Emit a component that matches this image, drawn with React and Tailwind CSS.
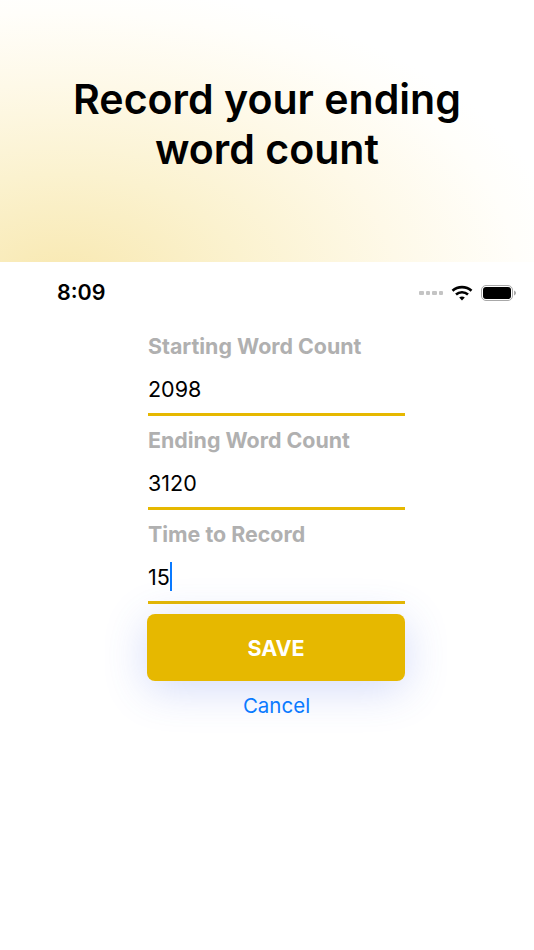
const font = "font-['Inter',sans-serif]";

function Field({ label, value, caret }) {
  return (
    <div className="flex h-[94px] flex-col">
      <div className="h-[32px] pt-[1px] text-[21.4px] leading-[32px] font-bold text-[#b0b0b0]">{label}</div>
      <div className="flex h-[52px] items-center pt-[3px] text-[21.5px] leading-[30px] text-black">
        <span>{value}</span>
        {caret && <span className="h-[29px] w-[2.5px] bg-[#0a7aff]" />}
      </div>
      <div className="h-[2.5px] w-[257px] bg-[#e6b800]" />
    </div>
  );
}

export default function App() {
  return (
    <div className={`h-[950px] w-[534px] overflow-hidden bg-white ${font}`}>
      <header className="flex h-[262px] items-center justify-center bg-[radial-gradient(ellipse_510px_300px_at_60px_282px,#f8e8b0_0%,#fbf2cf_36%,#fef9e8_66%,#fffefa_90%,#ffffff_100%)]">
        <h1 className="mt-[-15px] text-center text-[41.1px] leading-[50px] font-semibold text-black">
          Record your ending<br />word count
        </h1>
      </header>

      <div className="flex h-[62px] items-center justify-between pr-[17px] pl-[57px]">
        <span className="text-[21.5px] leading-none font-semibold text-black">8:09</span>
        <div className="flex items-center gap-[8px]">
          <div className="flex gap-[2px]">
            <span className="h-[4px] w-[4.5px] rounded-[1px] bg-[#c4c4c4]" />
            <span className="h-[4px] w-[4.5px] rounded-[1px] bg-[#c4c4c4]" />
            <span className="h-[4px] w-[4.5px] rounded-[1px] bg-[#c4c4c4]" />
            <span className="h-[4px] w-[4.5px] rounded-[1px] bg-[#c4c4c4]" />
          </div>
          <svg width="22" height="16" viewBox="0 0 22 16" fill="none">
            <path d="M1.5 5.8C6.8 0.9 15.2 0.9 20.5 5.8" stroke="black" strokeWidth="2.6" />
            <path d="M5 9.5C8.4 6.4 13.6 6.4 17 9.5" stroke="black" strokeWidth="2.6" />
            <path d="M8.2 12.6L11 15.6L13.8 12.6C12.2 11.2 9.8 11.2 8.2 12.6Z" fill="black" />
          </svg>
          <svg width="36" height="16" viewBox="0 0 36 16" fill="none">
            <rect x="0.5" y="0.5" width="31" height="15" rx="4.5" stroke="#a8a8a8" />
            <rect x="2" y="2" width="28" height="12" rx="3" fill="black" />
            <path d="M33 5.5C34.2 6 35 6.9 35 8C35 9.1 34.2 10 33 10.5Z" fill="#a8a8a8" />
          </svg>
        </div>
      </div>

      <main className="ml-[148px] flex w-[257px] flex-col pt-[5px]">
        <Field label="Starting Word Count" value="2098" />
        <Field label="Ending Word Count" value="3120" />
        <Field label="Time to Record" value="15" caret />
        <button className="mt-[3px] ml-[-1px] h-[67px] w-[258px] rounded-[8px] bg-[#e6b800] pt-[1px] text-[21.5px] font-bold text-white shadow-[0_8px_44px_rgba(70,100,230,0.24)]">
          SAVE
        </button>
        <div className="mt-[11px] text-center text-[20.5px] leading-[28px] text-[#0a7aff]">Cancel</div>
      </main>
    </div>
  );
}
